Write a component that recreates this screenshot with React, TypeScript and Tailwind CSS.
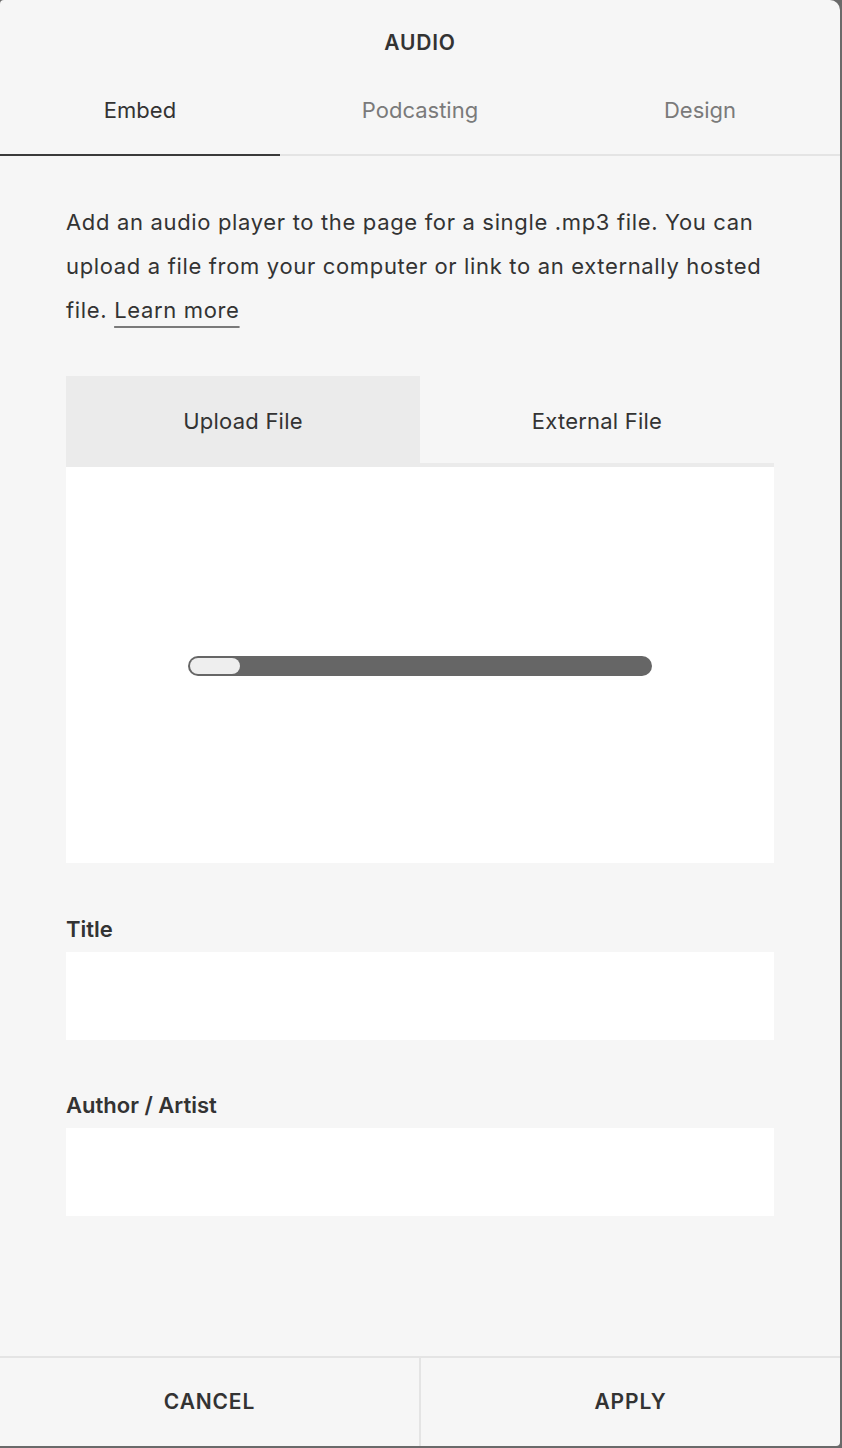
import React from "react";

export default function App() {
  const font = { fontFamily: "Inter, 'Noto Sans', sans-serif" };
  return (
    <div className="w-[842px] h-[1448px] bg-[#6a6a6a] overflow-hidden" style={font}>
      <div className="w-[840px] h-[1446px] bg-[#f6f6f6] rounded-tr-[10px] rounded-tl-[4px] rounded-br-[4px] flex flex-col text-[#333]">
        <div className="pt-[33px] flex justify-center">
          <span className="text-[21px] font-semibold tracking-[0.04em] leading-[20px]">AUDIO</span>
        </div>
        <div className="flex h-[103px] border-b-2 border-[#e4e4e4]">
          <div className="flex-1 flex justify-center pt-[45px] text-[22px] leading-[24px] text-[#333] border-b-2 border-[#3a3a3a] -mb-[2px]">Embed</div>
          <div className="flex-1 flex justify-center pt-[45px] text-[22px] leading-[24px] text-[#7a7a7a]">Podcasting</div>
          <div className="flex-1 flex justify-center pt-[45px] text-[22px] leading-[24px] text-[#7a7a7a]">Design</div>
        </div>
        <div className="px-[66px] pt-[44px] flex flex-col">
          <p className="text-[22px] leading-[44px] text-[#333] tracking-[0.03em]">
            <span className="block whitespace-nowrap">Add an audio player to the page for a single .mp3 file. You can</span>
            <span className="block whitespace-nowrap">upload a file from your computer or link to an externally hosted</span>
            <span className="block whitespace-nowrap">
              file.{" "}
              <span className="underline decoration-[#7a7a7a] decoration-2 underline-offset-[8px]">Learn more</span>
            </span>
          </p>
          <div className="mt-[44px] flex h-[91px]">
            <div className="flex-1 bg-[#ebebeb] flex items-center justify-center text-[22px] tracking-[0.01em]">Upload File</div>
            <div className="flex-1 bg-[#f6f6f6] border-b-4 border-[#ebebeb] flex items-center justify-center text-[22px] tracking-[0.01em] pt-[4px]">External File</div>
          </div>
          <div className="h-[396px] bg-white flex items-center justify-center pt-[2px]">
            <div className="w-[464px] h-[20px] rounded-full bg-[#666] p-[2px] flex">
              <div className="w-[50px] h-[16px] rounded-full bg-[#eeeeee]"></div>
            </div>
          </div>
          <div className="mt-[55px] text-[22px] font-semibold leading-[22px]">Title</div>
          <div className="mt-[12px] h-[88px] bg-white"></div>
          <div className="mt-[54px] text-[22px] font-semibold leading-[22px]">Author / Artist</div>
          <div className="mt-[12px] h-[88px] bg-white"></div>
        </div>
        <div className="mt-auto h-[90px] border-t-2 border-[#e4e4e4] flex">
          <div className="flex-1 flex items-center justify-center text-[21px] font-semibold tracking-[0.04em] border-r-2 border-[#e4e4e4]">CANCEL</div>
          <div className="flex-1 flex items-center justify-center text-[21px] font-semibold tracking-[0.04em]">APPLY</div>
        </div>
      </div>
    </div>
  );
}
